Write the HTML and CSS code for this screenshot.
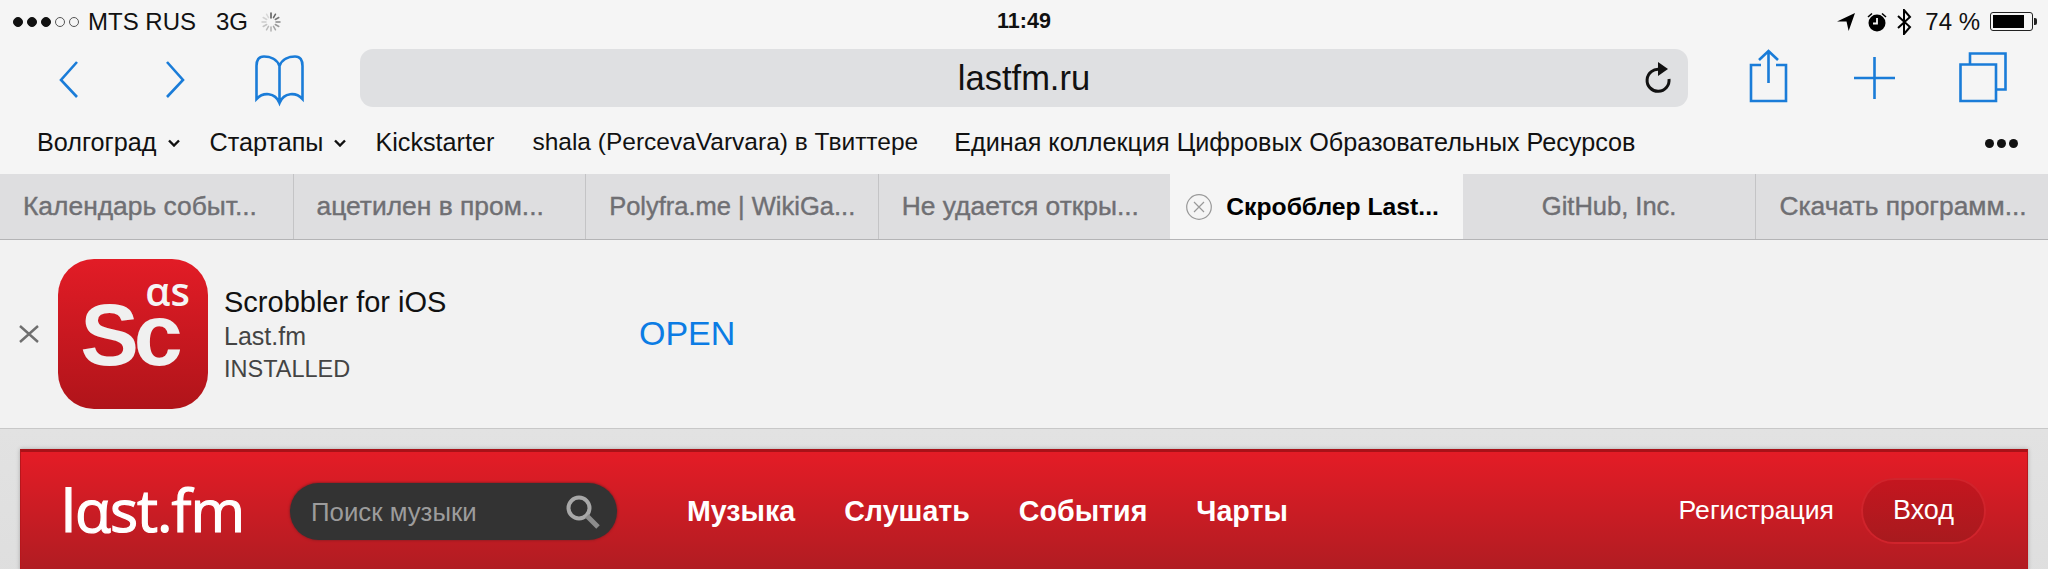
FILE: index.html
```html
<!DOCTYPE html>
<html lang="en">
<head>
    <meta charset="UTF-8">
    <meta name="viewport" content="width=device-width, initial-scale=1.0">
    <title>last.fm</title>
    <link rel="stylesheet" href="styles.css">
</head>
<body>
    <div class="status-bar">
        <div class="status-left">
            <span class="signal">
                <i class="dot"></i><i class="dot"></i><i class="dot"></i><i class="dot off"></i><i class="dot off"></i>
            </span>
            <span class="carrier">MTS RUS</span>
            <span class="network">3G</span>
            <svg class="spinner" width="20" height="20" viewBox="0 0 20 20" stroke-width="1.5" stroke-linecap="round">
                <line x1="10" y1="1" x2="10" y2="6" stroke="#555"/>
                <line x1="14.5" y1="2.2" x2="12.5" y2="5.700" stroke="#666"/>
                <line x1="17.8" y1="5.5" x2="14.300" y2="7.500" stroke="#777"/>
                <line x1="19" y1="10" x2="15" y2="10" stroke="#888"/>
                <line x1="17.8" y1="14.5" x2="14.300" y2="12.500" stroke="#999"/>
                <line x1="14.5" y1="17.8" x2="12.500" y2="14.300" stroke="#a6a6a6"/>
                <line x1="10" y1="19" x2="10" y2="15" stroke="#b0b0b0"/>
                <line x1="5.5" y1="17.8" x2="7.500" y2="14.300" stroke="#bbb"/>
                <line x1="2.2" y1="14.5" x2="5.700" y2="12.500" stroke="#c4c4c4"/>
                <line x1="1" y1="10" x2="5" y2="10" stroke="#ccc"/>
                <line x1="2.2" y1="5.5" x2="5.700" y2="7.500" stroke="#d2d2d2"/>
                <line x1="5.5" y1="2.2" x2="7.500" y2="5.700" stroke="#d8d8d8"/>
            </svg>
        </div>
        <div class="clock">11:49</div>
        <div class="status-right">
            <svg class="st-arrow" width="18" height="18" viewBox="0 0 17 17"><path d="M0 8 17 0 11 17 9 8Z" fill="#000"/></svg>
            <svg class="st-alarm" width="20" height="20" viewBox="0 0 20 20">
                <circle cx="10" cy="11" r="8.500" fill="#000"/>
                <path d="M10 6v5.5H6" fill="none" stroke="#f5f5f5" stroke-width="1.8"/>
                <path d="M1 5 5 1.5M19 5 15 1.5" stroke="#000" stroke-width="1.6"/>
            </svg>
            <svg class="st-bt" width="15" height="26" viewBox="0 0 15 26"><path d="M1 7 13 18 7 25V1L13 8 1 19" fill="none" stroke="#000" stroke-width="2"/></svg>
            <span class="battery-text">74 %</span>
            <span class="battery"><span class="battery-fill"></span></span>
            <span class="battery-tip"></span>
        </div>
    </div>

    <div class="toolbar">
        <svg class="tool back" width="19" height="58" viewBox="0 0 19 58"><path d="M18 13 2 31 18 48" class="ico"/></svg>
        <svg class="tool forward" width="19" height="58" viewBox="0 0 19 58"><path d="M1 13 17 31 1 48" class="ico"/></svg>
        <svg class="tool book" width="49" height="58" viewBox="0 0 49 58">
            <path d="M24.5 17C22 10 15 7.500 9 7.500 3.500 7.500 1.500 11 1.500 17V50C8 43 20 43 24.500 54 29 43 41 43 47.500 50V17C47.500 11 45.500 7.500 40 7.500 34 7.500 27 10 24.500 17ZM24.500 17V54" class="ico"/>
        </svg>
        <div class="url-bar">
            <span class="url-text">lastfm.ru</span>
            <svg class="reload" width="29" height="32" viewBox="0 0 27 32">
                <path d="M16 7.500A11 11 0 1 0 25 17" fill="none" stroke="#111" stroke-width="3"/>
                <path d="M14 0 24 7 14 14Z" fill="#111"/>
            </svg>
        </div>
        <svg class="tool share" width="39" height="58" viewBox="0 0 39 58">
            <path d="M12 16H2V52H37V16H27M19.500 34V2M10 11 19.500 2 29 11" class="ico"/>
        </svg>
        <svg class="tool plus" width="41" height="58" viewBox="0 0 41 58"><path d="M20.500 8V50M0 29H41" class="ico"/></svg>
        <svg class="tool tabs-btn" width="48" height="58" viewBox="0 0 48 58">
            <path d="M1.500 15.500H37V52H1.500ZM11 15V4.500H46.500V40.500H38" class="ico"/>
        </svg>
    </div>

    <div class="bookmarks">
        <span class="mark">Волгоград<svg class="caret" width="12" height="8" viewBox="0 0 12 8"><path d="M1 1.500 6 6.500 11 1.500" fill="none" stroke="#111" stroke-width="2.400"/></svg></span>
        <span class="mark">Стартапы<svg class="caret" width="12" height="8" viewBox="0 0 12 8"><path d="M1 1.500 6 6.500 11 1.500" fill="none" stroke="#111" stroke-width="2.400"/></svg></span>
        <span class="mark">Kickstarter</span>
        <span class="mark mark-narrow">shala (PercevaVarvara) в Твиттере</span>
        <span class="mark">Единая коллекция Цифровых Образовательных Ресурсов</span>
        <span class="more"><i></i><i></i><i></i></span>
    </div>

    <div class="tab-bar">
        <div class="tab">Календарь событ...</div>
        <div class="tab">ацетилен в пром...</div>
        <div class="tab tab-latin">Polyfra.me | WikiGa...</div>
        <div class="tab">Не удается откры...</div>
        <div class="tab active">
            <svg class="tab-close" width="26" height="26" viewBox="0 0 26 26">
                <circle cx="13" cy="13" r="12.300" fill="none" stroke="#999" stroke-width="1.200"/>
                <path d="M8 8 18 18M18 8 8 18" stroke="#999" stroke-width="1.200"/>
            </svg>
            Скробблер Last...
        </div>
        <div class="tab tab-short">GitHub, Inc.</div>
        <div class="tab">Скачать программ...</div>
    </div>

    <div class="app-banner">
        <svg class="banner-close" width="20" height="18" viewBox="0 0 20 18"><path d="M1 1 19 17M19 1 1 17" stroke="#6f6f6f" stroke-width="2.400"/></svg>
        <div class="app-icon">
            <span class="app-icon-as" aria-label="as">αs</span>
            <span class="app-icon-sc">Sc</span>
        </div>
        <div class="app-info">
            <div class="app-name">Scrobbler for iOS</div>
            <div class="app-sub">Last.fm</div>
            <div class="app-state">INSTALLED</div>
        </div>
        <a class="app-open">OPEN</a>
    </div>

    <div class="page">
        <div class="site-header">
            <div class="logo" aria-label="last.fm">lαst.fm</div>
            <div class="search">
                <span class="search-text">Поиск музыки</span>
                <svg class="search-icon" width="34" height="34" viewBox="0 0 34 34">
                    <circle cx="13" cy="13" r="10.500" fill="none" stroke="#a8a8a8" stroke-width="4"/>
                    <path d="M21 21 32 32" stroke="#8c8c8c" stroke-width="5"/>
                </svg>
            </div>
            <nav class="nav">
                <a>Музыка</a>
                <a>Слушать</a>
                <a>События</a>
                <a>Чарты</a>
            </nav>
            <a class="register">Регистрация</a>
            <a class="login">Вход</a>
        </div>
    </div>
</body>
</html>
```

FILE: styles.css
```css
html, body {
    margin: 0;
    height: 569px;
    overflow: hidden;
}
body {
    font-family: "Liberation Sans", Arial, sans-serif;
    background-color: #f5f5f5;
    color: #111;
}

/* status bar */
.status-bar {
    display: grid;
    grid-template-columns: 1fr auto 1fr;
    align-items: center;
    height: 43px;
    font-size: 24px;
}
.status-left, .status-right {
    display: flex;
    align-items: center;
}
.status-left {
    padding-left: 13px;
}
.signal {
    display: flex;
    gap: 4px;
    width: 75px;
}
.dot {
    width: 10px;
    height: 10px;
    box-sizing: border-box;
    border: 1px solid #111;
    background-color: #111;
    border-radius: 50%;
}
.dot.off {
    background-color: transparent;
    border-color: #555;
}
.network {
    margin-left: 20px;
}
.spinner {
    margin-left: 13px;
}
.clock {
    font-weight: bold;
    font-size: 21.500px;
}
.status-right {
    justify-content: flex-end;
    padding-right: 11px;
}
.st-alarm {
    margin-left: 12px;
}
.st-bt {
    margin-left: 10px;
}
.battery-text {
    margin-left: 13px;
}
.battery {
    display: block;
    width: 43px;
    height: 19px;
    margin-left: 10px;
    padding: 2px;
    box-sizing: border-box;
    border: 1px solid #222;
    border-radius: 3px;
}
.battery-fill {
    display: block;
    width: 31px;
    height: 13px;
    background-color: #000;
}
.battery-tip {
    width: 3px;
    height: 7px;
    margin-left: 1px;
    background-color: #222;
    border-radius: 0 2px 2px 0;
}

/* toolbar */
.toolbar {
    display: flex;
    align-items: flex-start;
    height: 64px;
    padding: 6px 0 0 59px;
}
.ico {
    fill: none;
    stroke: #1a7cd8;
    stroke-width: 2.600;
}
.forward {
    margin-left: 88px;
}
.book {
    margin-left: 70px;
}
.url-bar {
    position: relative;
    display: flex;
    align-items: center;
    justify-content: center;
    width: 1328px;
    height: 58px;
    margin-left: 56px;
    background-color: #dfe0e2;
    border-radius: 13px;
}
.url-text {
    font-size: 34.500px;
    color: #111;
}
.reload {
    position: absolute;
    right: 16px;
    top: 13px;
}
.share {
    margin-left: 61px;
}
.plus {
    margin-left: 66px;
}
.tabs-btn {
    margin-left: 64px;
}

/* bookmarks */
.bookmarks {
    display: flex;
    align-items: center;
    box-sizing: border-box;
    height: 61px;
    padding: 0 0 3px 37px;
    font-size: 25.200px;
    white-space: nowrap;
}
.mark {
    display: flex;
    align-items: center;
    margin-right: 36px;
}
.mark-narrow {
    font-size: 24.500px;
}
.caret {
    margin: 2px 0 0 11px;
}
.mark:nth-child(1) {
    margin-right: 30px;
}
.mark:nth-child(2) {
    margin-right: 29px;
}
.mark:nth-child(3) {
    margin-right: 38px;
}
.more {
    display: flex;
    gap: 3px;
    margin-left: auto;
    padding: 3px 30px 0 0;
}
.more i {
    width: 9px;
    height: 9px;
    background-color: #111;
    border-radius: 50%;
}

/* tabs */
.tab-bar {
    display: grid;
    grid-template-columns: repeat(7, 1fr);
    height: 65px;
    background-color: #dedee0;
    border-bottom: 1px solid #b4b4b6;
}
.tab {
    display: flex;
    align-items: center;
    padding-left: 23px;
    font-size: 26.400px;
    color: #6f6f73;
    -webkit-text-stroke: 0.4px #6f6f73;
    border-left: 1px solid #c4c4c6;
    white-space: nowrap;
    overflow: hidden;
}
.tab-latin {
    padding-left: 23px;
    font-size: 25.500px;
}
.tab-short {
    justify-content: center;
    padding-left: 0;
    font-size: 25.500px;
}
.tab:first-child {
    border-left: none;
}
.tab.active {
    padding-left: 16px;
    gap: 14px;
    font-size: 24.700px;
    font-weight: bold;
    color: #000;
    -webkit-text-stroke: 0;
    background-color: #f5f5f5;
    border-left: none;
}
.tab.active + .tab {
    border-left: none;
}

/* app banner */
.app-banner {
    display: flex;
    align-items: center;
    height: 188px;
    padding-left: 19px;
    background-color: #f2f2f2;
    border-bottom: 1px solid #c8c8c8;
}
.app-icon {
    position: relative;
    display: flex;
    align-items: flex-end;
    justify-content: center;
    box-sizing: border-box;
    width: 150px;
    height: 150px;
    margin-left: 19px;
    padding: 0 8px 39px 0;
    background: linear-gradient(#e21c26, #b0141a);
    border-radius: 36px;
}
.app-icon-sc {
    font-size: 88px;
    line-height: 70px;
    font-weight: bold;
    letter-spacing: -5px;
    color: #f0f0f0;
}
.app-icon-as {
    position: absolute;
    top: 20px;
    right: 18px;
    font-family: "Open Sans", sans-serif;
    font-size: 40px;
    line-height: 24px;
    font-weight: 600;
    color: #f5f5f5;
}
.app-info {
    width: 415px;
    margin: 2px 0 0 16px;
    box-sizing: border-box;
}
.app-name {
    font-size: 29px;
    line-height: 36px;
}
.app-sub {
    font-size: 25px;
    line-height: 32px;
    color: #444;
}
.app-state {
    font-size: 23.500px;
    line-height: 34px;
    color: #444;
}
.app-open {
    margin-top: -2px;
    font-size: 34px;
    color: #0c7ce4;
}

/* last.fm page */
.page {
    height: 140px;
    padding: 20px 20px 0;
    background: linear-gradient(#e2e2e2, #dedede);
}
.site-header {
    display: flex;
    align-items: center;
    box-sizing: border-box;
    height: 122px;
    padding: 0 43px 0 40px;
    color: #fff;
    background: linear-gradient(#e41c26, #b01c22);
    border-top: 3px solid #a81218;
    border-left: 1px solid #b8161c;
    border-right: 1px solid #b8161c;
    box-shadow: 0 0 4px rgba(0, 0, 0, 0.25);
}
.logo {
    width: 184px;
    margin-top: -5px;
    font-family: "Open Sans", sans-serif;
    font-size: 59px;
    line-height: 58px;
    letter-spacing: -1px;
    -webkit-text-stroke: 1.200px #fff;
    white-space: nowrap;
}
.search {
    display: flex;
    align-items: center;
    justify-content: space-between;
    box-sizing: border-box;
    width: 327px;
    height: 57px;
    margin-left: 45px;
    padding: 0 17px 0 21px;
    background-color: #333;
    border-radius: 29px;
    box-shadow: 0 0 2px 1px #9a1c22;
}
.search-text {
    padding-top: 2px;
    font-size: 25.800px;
    color: #9c9c9c;
}
.nav {
    display: flex;
    gap: 49px;
    margin-left: 70px;
    font-size: 28.600px;
    font-weight: bold;
}
.register {
    margin: -2px 0 0 auto;
    font-size: 26.600px;
}
.login {
    display: block;
    box-sizing: border-box;
    width: 121px;
    height: 62px;
    margin: -2px 0 0 29px;
    font-size: 27px;
    line-height: 60px;
    text-align: center;
    background: linear-gradient(#c4161f, #a81a1e);
    border-radius: 31px;
    box-shadow: 0 0 0 2px #d0242c;
}
```
